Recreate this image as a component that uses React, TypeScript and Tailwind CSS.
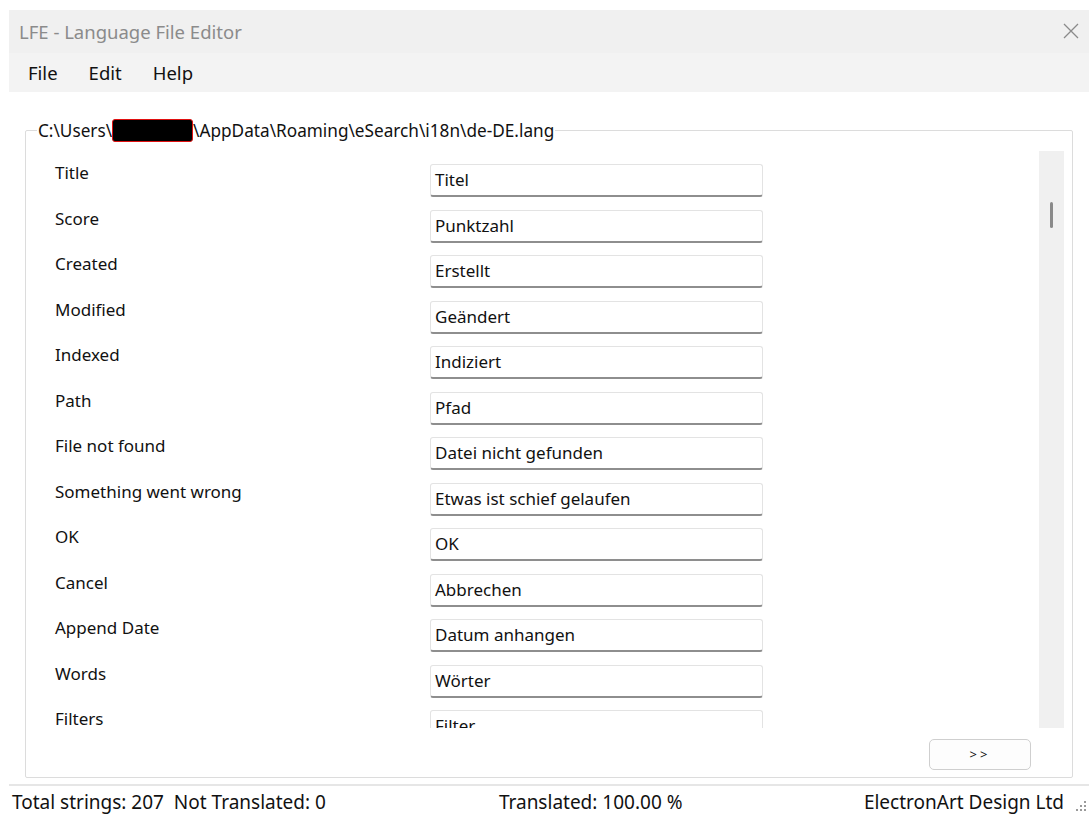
import React from "react";

type Entry = {
  key: string;
  value: string;
};

const entries: Entry[] = [
  { key: "Title", value: "Titel" },
  { key: "Score", value: "Punktzahl" },
  { key: "Created", value: "Erstellt" },
  { key: "Modified", value: "Geändert" },
  { key: "Indexed", value: "Indiziert" },
  { key: "Path", value: "Pfad" },
  { key: "File not found", value: "Datei nicht gefunden" },
  { key: "Something went wrong", value: "Etwas ist schief gelaufen" },
  { key: "OK", value: "OK" },
  { key: "Cancel", value: "Abbrechen" },
  { key: "Append Date", value: "Datum anhangen" },
  { key: "Words", value: "Wörter" },
  { key: "Filters", value: "Filter" },
];

const font = { fontFamily: '"Noto Sans", "Open Sans", sans-serif' };

const StringRow = ({ entry }: { entry: Entry }) => (
  <div className="flex h-[45.5px] shrink-0 items-start">
    <div className="w-[390px] pl-[15px] pt-[11px] text-[17px] leading-[22px] text-[#111]">
      {entry.key}
    </div>
    <div className="mt-[13px] flex h-[33px] w-[333px] items-center rounded-[3px] border border-[#e3e3e3] border-b-[2px] border-b-[#8e8e8e] bg-white px-[4px] text-[17px] text-[#111]">
      {entry.value}
    </div>
  </div>
);

export default function App() {
  return (
    <div
      className="relative h-[814px] w-[1089px] overflow-hidden bg-white"
      style={font}
    >
      <div className="h-[10px]" />
      <div className="ml-[9px] flex flex-col">
        {/* title bar */}
        <div className="flex h-[43px] items-center justify-between bg-[#f0f0f0] pl-[10px] pr-[9px]">
          <span className="text-[18.5px] text-[#8b8b8b]">
            LFE - Language File Editor
          </span>
          <svg width="18" height="18" viewBox="0 0 18 18" className="mt-[-2px]">
            <path
              d="M2 2 L16 16 M16 2 L2 16"
              stroke="#8a8a8a"
              strokeWidth="1.3"
              fill="none"
            />
          </svg>
        </div>

        {/* menu */}
        <div className="flex h-[39px] items-center gap-[31px] bg-[#f3f3f3] pl-[19px] text-[18.5px] text-[#111]">
          <span>File</span>
          <span>Edit</span>
          <span>Help</span>
        </div>

        {/* group box with the file path */}
        <fieldset className="ml-[16px] mt-[27px] h-[659px] w-[1048px] rounded-[2px] border border-[#dcdcdc] px-[14px] pb-[8px]">
          <legend className="ml-[-3px] flex items-center px-[1px] text-[17.2px] leading-[22px] text-[#111]">
            C:\Users\
            <span className="inline-block h-[23px] w-[81px] rounded-[3px] border border-[#e01010] bg-black" />
            \AppData\Roaming\eSearch\i18n\de-DE.lang
          </legend>

          <div className="mt-[9px] flex h-[577px]">
            <div className="flex flex-1 flex-col overflow-hidden">
              {entries.map((entry) => (
                <StringRow key={entry.key} entry={entry} />
              ))}
            </div>
            <div className="mr-[-6px] flex w-[25px] justify-center bg-[#f0f0f0] pt-[51px]">
              <div className="h-[26px] w-[3px] rounded-full bg-[#8a8a8a]" />
            </div>
          </div>

          <div className="mt-[11px] flex justify-end pr-[27px]">
            <button className="flex h-[31px] w-[102px] items-center justify-center rounded-[5px] border border-[#cfcfcf] bg-[#fdfdfd] text-[13px] tracking-[3px] text-[#111]">
              &gt;&gt;
            </button>
          </div>
        </fieldset>
      </div>

      {/* status bar */}
      <div className="mt-[6px] ml-[9px] flex h-[30px] flex-col">
        <div className="h-[2px] shrink-0 bg-[#e6e6e6]" />
        <div className="flex items-center pt-[5px] text-[19px] leading-[22px] text-[#111]">
          <span className="ml-[3px] whitespace-pre">
            Total strings: 207  Not Translated: 0
          </span>
          <span className="ml-[173px]">Translated: 100.00 %</span>
          <span className="ml-auto mr-[9px]">ElectronArt Design Ltd</span>
          <svg width="14" height="14" viewBox="0 0 14 14" className="mr-[2px] mt-[6px]">
            {[
              [11, 3],
              [7, 7],
              [11, 7],
              [3, 11],
              [7, 11],
              [11, 11],
            ].map(([x, y]) => (
              <rect key={`${x}-${y}`} x={x} y={y} width="2" height="2" fill="#9a9a9a" />
            ))}
          </svg>
        </div>
      </div>
    </div>
  );
}
